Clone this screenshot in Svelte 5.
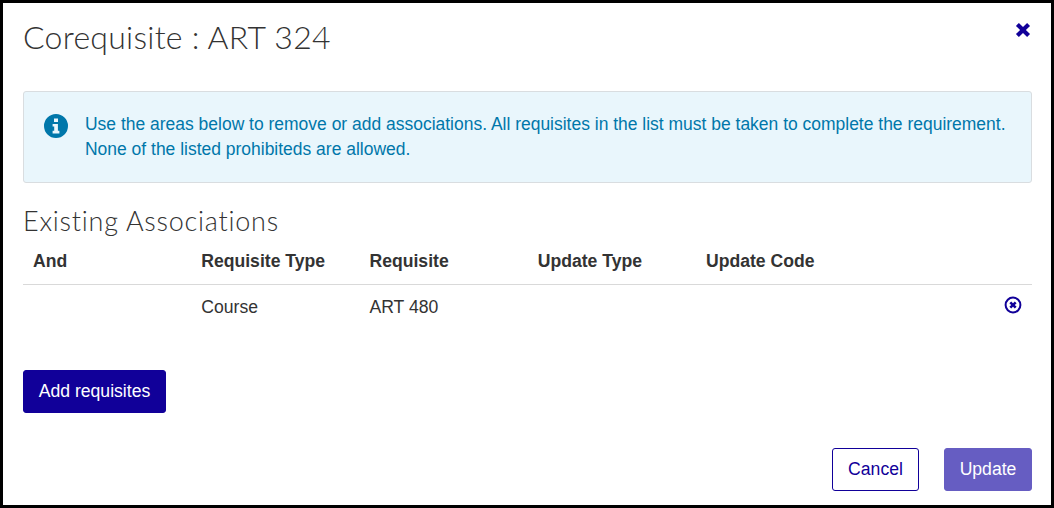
<script lang="ts">
  const columns = ["And", "Requisite Type", "Requisite", "Update Type", "Update Code"];
  const rows = [{ and: "", type: "Course", requisite: "ART 480", updateType: "", updateCode: "" }];
</script>

<div class="modal">
  <header class="modal-head">
    <h1>Corequisite : ART 324</h1>
    <button class="close" aria-label="Close">
      <svg viewBox="1.4 1.4 13.2 13.2" width="16" height="16" aria-hidden="true">
        <path d="M2.2 4.6 4.6 2.2 8 5.6l3.4-3.4 2.4 2.4L10.4 8l3.4 3.4-2.4 2.4L8 10.4l-3.4 3.4-2.4-2.4L5.6 8z" />
      </svg>
    </button>
  </header>

  <div class="alert">
    <svg class="alert-icon" viewBox="0 0 24 24" width="24" height="24" aria-hidden="true">
      <path
        fill-rule="evenodd"
        d="M12 0a12 12 0 1 1 0 24a12 12 0 0 1 0-24zM10 4.5v3.6h4V4.5zM8.6 10v2.4h1.6v4.4H8.6v2.6h6.8v-2.6h-1.5V10z"
      />
    </svg>
    <p>
      Use the areas below to remove or add associations. All requisites in the list must be taken to complete the
      requirement. None of the listed prohibiteds are allowed.
    </p>
  </div>

  <h2>Existing Associations</h2>
  <table>
    <thead>
      <tr>
        {#each columns as column}<th>{column}</th>{/each}
        <th class="action"></th>
      </tr>
    </thead>
    <tbody>
      {#each rows as row}
        <tr>
          <td>{row.and}</td>
          <td>{row.type}</td>
          <td>{row.requisite}</td>
          <td>{row.updateType}</td>
          <td>{row.updateCode}</td>
          <td class="action">
            <button class="remove" aria-label="Remove">
              <svg viewBox="0 0 18 18" width="18" height="18" aria-hidden="true">
                <circle cx="9" cy="9" r="7.4" fill="none" stroke="currentColor" stroke-width="2" />
                <path d="M5.4 7.2 7.2 5.4 9 7.2l1.8-1.8 1.8 1.8L10.8 9l1.8 1.8-1.8 1.8L9 10.8l-1.8 1.8-1.8-1.8L7.2 9z" />
              </svg>
            </button>
          </td>
        </tr>
      {/each}
    </tbody>
  </table>

  <button class="btn primary">Add requisites</button>

  <footer>
    <button class="btn outline">Cancel</button>
    <button class="btn disabled">Update</button>
  </footer>
</div>

<style>
  :global(body) {
    margin: 0;
    background: #fff;
  }

  .modal {
    box-sizing: border-box;
    width: 1054px;
    height: 508px;
    padding: 0 19px 0 20px;
    border: 3px solid #000;
    background: #fff;
    color: #333;
    font-family: "Liberation Sans", Arial, sans-serif;
    font-size: 17.6px;
  }

  .modal-head {
    display: flex;
    justify-content: space-between;
    align-items: flex-start;
    height: 88px;
  }

  h1 {
    margin: 12px 0 0;
    font-family: Lato, sans-serif;
    font-size: 32px;
    font-weight: 300;
    line-height: 44px;
    letter-spacing: 0.26px;
  }

  button {
    font-family: inherit;
  }

  .close {
    display: flex;
    margin: 19px 1px 0 0;
    padding: 0;
    border: 0;
    background: none;
    color: #110099;
    fill: currentColor;
  }

  .alert {
    display: flex;
    box-sizing: border-box;
    gap: 17px;
    height: 92px;
    padding: 20px 20px 0;
    border: 1px solid #d9dde0;
    border-radius: 3px;
    background: #e9f6fc;
    color: #0077aa;
    font-size: 17.48px;
  }

  .alert-icon {
    flex: none;
    margin-top: 2px;
    fill: #0077aa;
  }

  .alert p {
    margin: 0;
    line-height: 25px;
  }

  h2 {
    margin: 21px 0 0;
    font-family: Lato, sans-serif;
    font-size: 27px;
    font-weight: 300;
    line-height: 34px;
    letter-spacing: 0.75px;
  }

  table {
    width: 100%;
    border-collapse: collapse;
    table-layout: fixed;
  }

  th {
    box-sizing: border-box;
    height: 46px;
    padding: 0 10px;
    border-bottom: 1px solid #d9d9d9;
    font-weight: 700;
    text-align: left;
    vertical-align: middle;
    line-height: 20px;
  }

  th:not(.action) {
    width: 168.25px;
  }

  td {
    box-sizing: border-box;
    height: 46px;
    padding: 0 10px;
    color: #333;
  }

  .action {
    text-align: right;
  }

  .remove {
    display: inline-flex;
    padding: 0;
    border: 0;
    background: none;
    color: #110099;
    fill: currentColor;
  }

  .btn {
    box-sizing: border-box;
    height: 43px;
    padding-bottom: 3px;
    border-radius: 3px;
    font-size: 17.6px;
    line-height: 20px;
  }

  .primary {
    display: block;
    width: 143px;
    margin-top: 40px;
    border: 1px solid #110099;
    background: #110099;
    color: #fff;
  }

  footer {
    display: flex;
    justify-content: flex-end;
    gap: 25px;
    margin-top: 35px;
  }

  .outline {
    width: 87px;
    border: 1px solid #110099;
    background: #fff;
    color: #110099;
  }

  .disabled {
    width: 88px;
    border: 1px solid #665dc2;
    background: #665dc2;
    color: #fff;
  }
</style>
